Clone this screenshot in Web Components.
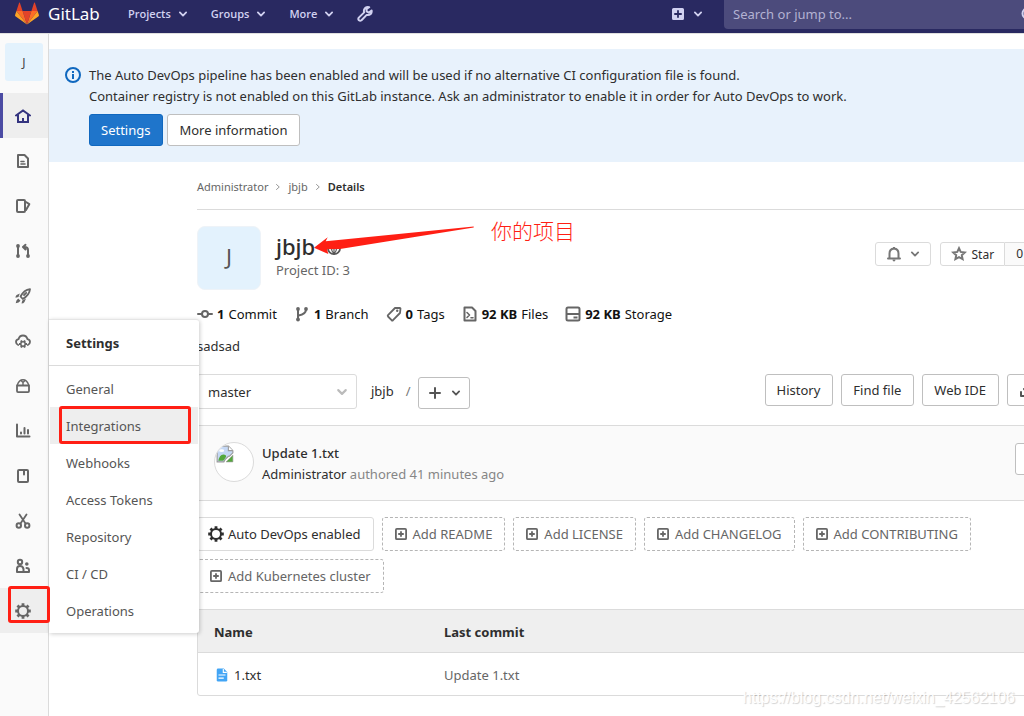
<!DOCTYPE html>
<html lang="en">
<head>
<meta charset="utf-8">
<title>Administrator / jbjb · GitLab</title>
<style>
  html, body { margin: 0; height: 100%; }
  body { overflow: hidden; background: #fff; color: #2e2e2e; font: 13px/21px "Noto Sans", "Noto Sans CJK SC", sans-serif; }
</style>
</head>
<body>
<project-page></project-page>
<script>
const define = (name, html, setup) => {
  const tpl = document.createElement('template');
  tpl.innerHTML = '<style>*{box-sizing:border-box}a{color:inherit;text-decoration:none}</style>' + html;
  customElements.define(name, class extends HTMLElement {
    constructor() {
      super();
      this.attachShadow({ mode: 'open' }).append(tpl.content.cloneNode(true));
    }
    connectedCallback() { if (setup) setup(this, this.shadowRoot); }
  });
};

const S = 'fill="none" stroke="currentColor" stroke-width="2" stroke-linecap="round" stroke-linejoin="round"';
const gear = (cx, cy, r, o, w, n = 8) => {
  let t = '';
  for (let i = 0; i < n; i++) {
    const a = Math.PI * 2 * i / n;
    t += `M${cx + Math.cos(a) * r} ${cy + Math.sin(a) * r}L${cx + Math.cos(a) * o} ${cy + Math.sin(a) * o}`;
  }
  return `<circle cx="${cx}" cy="${cy}" r="${r}" fill="none" stroke="currentColor" stroke-width="${w}"/><path d="${t}" fill="none" stroke="currentColor" stroke-width="${w * 1.4}"/>`;
};
const icons = {
  chevron: `<path ${S} stroke-width="2.900" d="M3 5.500 8 10.500 13 5.500"/>`,
  'chevron-right': `<path ${S} d="M5 3 10.500 8 5 13"/>`,
  home: `<path ${S} stroke-linejoin="miter" d="M1 7.500 8 2.500 15 7.500M3 7v7h10V7"/><path d="M7 10h2v4H7z" fill="currentColor"/>`,
  doc: `<path ${S} d="M3 2h6.500L13 5.500V14H3z"/><path ${S} stroke-width="1.600" d="M6 8.500h3M6 11h4"/>`,
  issues: `<path ${S} d="M3 2h6q1 0 1 1v10q0 1-1 1H3q-1 0-1-1V3q0-1 1-1z"/><path ${S} d="M11 4l3.300 2.200L11 12"/>`,
  merge: `<path ${S} d="M3 3v10M13 13V7q0-3-3.500-3M10.500 1.800 8 4l2.500 2.500"/><circle cx="3" cy="3" r="1.900" fill="currentColor"/><circle cx="3" cy="13" r="1.900" fill="currentColor"/><circle cx="13" cy="13" r="1.900" fill="currentColor"/>`,
  rocket: `<path ${S} stroke-width="1.800" d="M5.500 8.500Q9 2 15 1.200 14.500 7 7.800 11z M9 7l2.200-2.200"/><path fill="currentColor" d="M4.800 5.500 1.600 7Q.4 8 .5 9.800l3-.8zM11 10.500 9.500 14Q8.500 15.500 6.500 15.500L7.300 12.500zM3.200 10.500l2.300 2.200Q4 15 .7 15.300 1 12 3.200 10.500z"/>`,
  cloud: `<path ${S} stroke-width="1.800" d="M3.200 12Q1 11 1 9q0-2.300 2.500-2.800Q4.500 2.500 8 2.500t4.500 3.700Q15 6.700 15 9q0 2-2.200 3"/>` + gear(8, 11, 2.2, 4, 1.5, 6),
  package: `<path ${S} stroke-width="1.800" d="M2 7.500h12v5.600q0 1-1 1H3q-1 0-1-1z"/><path ${S} stroke-width="1.400" d="M2.300 7Q4 1.700 8 1.700T13.700 7M8 4.500 6 2.500M8 4.500 10 2.500M8 4.500V7"/>`,
  chart: `<path ${S} d="M2 1.500V13.500h12.500"/><path ${S} d="M6 9.500V10.500M9.500 5V10.500M13 7v3.500"/>`,
  book: `<path ${S} d="M4 2h8q1 0 1 1v10q0 1-1 1H4q-1 0-1-1V3q0-1 1-1z"/><path ${S} d="M9 2.500v4"/>`,
  scissors: `<path ${S} stroke-width="1.800" d="M4.500 1.500 10.500 10.500M11.500 1.500 5.500 10.500"/><circle cx="3.800" cy="12.500" r="2.200" ${S}/><circle cx="12.200" cy="12.500" r="2.200" ${S}/>`,
  users: `<circle cx="5" cy="4" r="2.200" ${S}/><circle cx="11.800" cy="6" r="1.800" fill="currentColor"/><path ${S} d="M2 14V11q0-3 3-3t3.500 3v3z"/><path ${S} d="M9 14h5v-2q0-2-2.500-2"/>`,
  gear: gear(8, 8, 5, 7.8, 2),
  info: `<circle cx="8" cy="8" r="7" ${S}/><path d="M7 7h2v5H7zM7 4h2v2H7z" fill="currentColor"/>`,
  wrench: `<path ${S} d="M14.600 4.500 11.800 6.600 9.600 5.400 9.600 2.800 12.200 1.200Q8.600.4 7.200 3.400 6.600 5 7.200 6.400L1.800 11.600Q.8 13 1.900 14.200 3.200 15.200 4.500 14.200L9.700 8.900Q12 9.500 13.700 8 15 6.600 14.600 4.500z"/>`,
  'plus-solid': `<path fill="currentColor" fill-rule="evenodd" d="M2 0h12q2 0 2 2v12q0 2-2 2H2q-2 0-2-2V2q0-2 2-2zM6.800 3v3.800H3v2.400h3.800V13h2.400V9.200H13V6.800H9.200V3z"/>`,
  'plus-square': `<path ${S} stroke-width="2.400" d="M2.500 1.200h11q1.300 0 1.300 1.300v11q0 1.300-1.300 1.300h-11q-1.300 0-1.300-1.300v-11q0-1.300 1.300-1.300z"/><path ${S} stroke-width="2.400" d="M8 5.200v5.600M5.200 8h5.600"/>`,
  plus: `<path ${S} d="M8 3v10M3 8h10"/>`,
  search: `<circle cx="6.500" cy="6.500" r="5" ${S}/><path ${S} d="M10.500 10.500 14.500 14.500"/>`,
  commit: `<circle cx="8" cy="8" r="3" ${S}/><path ${S} d="M1 8h3.500M11.500 8H15"/>`,
  branch: `<path ${S} d="M4 3v10M12 3.500Q12 8 4.500 9.500"/><circle cx="4" cy="3" r="1.900" fill="currentColor"/><circle cx="4" cy="13.500" r="1.900" fill="currentColor"/><circle cx="12" cy="3" r="1.900" fill="currentColor"/>`,
  tag: `<path ${S} stroke-width="1.800" d="M9 2l4.800-.2q.7 0 .7.700L14 7 7 14.200q-.7.600-1.400 0L2 10.500q-.6-.7 0-1.400z"/><circle cx="11.200" cy="4.800" r="1.200" fill="currentColor"/>`,
  code: `<path ${S} d="M2.500 1.500h7.500l3.500 3.500v9.500h-11z"/><path ${S} stroke-width="1.600" d="M5 6.500 7.500 9 5 11.500M9 11.700h2"/>`,
  disk: `<path ${S} d="M3 1.500h10q1.500 0 1.500 1.500v10q0 1.500-1.500 1.500H3q-1.500 0-1.500-1.500V3q0-1.500 1.500-1.500zM1.500 8h13"/><path ${S} stroke-linecap="butt" d="M8.500 11.500h4"/>`,
  globe: `<circle cx="8" cy="8" r="7" ${S}/><path ${S} stroke-width="1.300" d="M1 8h14M8 1v14M8 1Q2 8 8 15M8 1q6 7 0 14M2.500 4.500h11"/>`,
  bell: `<path ${S} d="M3.500 12V7.500Q3.500 3 8 2.500q4.500.5 4.500 5V12M2 12.500h12"/><path fill="currentColor" d="M6.500 13.500h3Q9.500 15.500 8 15.500T6.500 13.500zM7 1h2v2H7z"/>`,
  star: `<path ${S} stroke-linejoin="miter" d="M8 2.200 9.700 5.900 13.800 6.400 10.800 9.200 11.600 13.200 8 11.200 4.400 13.200 5.200 9.200 2.200 6.400 6.300 5.900z"/>`,
  download: `<path ${S} d="M2 10v4h12v-4M8 2v8M5 7l3 3 3-3"/>`,
  file: `<path fill="#42a5f5" d="M3.500.5H10L14 4.500V14q0 1.500-1.500 1.500h-9Q2 15.500 2 14V2Q2 .5 3.500.5z"/><path d="M9.500 1v4h4M4 8h8M4 11.500h6" fill="none" stroke="#fff" stroke-width="1.300"/>`,
  broken: `<path d="M1 1h10l4 4v2l-3 3-1 0-3 3-1 2H1z" fill="#c5d8f5" stroke="#9a9a9a"/><path d="M11 1v4h4" fill="#fff" stroke="#9a9a9a"/><path d="M2 14q1-5 4.500-5.500Q9 8.500 9 10.500L6.500 14z" fill="#54a83c"/><ellipse cx="5" cy="5" rx="2.200" ry="1.300" fill="#fff"/><path d="M15 9v6H9z" fill="#54a83c" stroke="#9a9a9a" stroke-width=".6"/>`,
  tanuki: `<path fill="#e24329" d="M12 22.500 16.400 9H7.600z"/><path fill="#fc6d26" d="M12 22.500 7.600 9H1.400zM12 22.500 16.400 9h6.200z"/><path fill="#fca326" d="M1.400 9 0 13.200q-.1.600.4 1L12 22.500zM22.600 9 24 13.200q.1.600-.4 1L12 22.500z"/><path fill="#e24329" d="M1.400 9h6.200L4.900.8q-.4-.8-.8 0zM22.600 9h-6.200L19.100.8q.4-.8.8 0z"/>`
};

define('gl-icon', `<style>:host{display:inline-block;flex:none;width:var(--size,16px);height:var(--size,16px)}svg{display:block;width:100%;height:100%}</style><svg aria-hidden="true"></svg>`,
  (el, root) => {
    const svg = root.querySelector('svg'), name = el.getAttribute('name');
    svg.setAttribute('viewBox', name === 'tanuki' ? '0 0 24 24' : '0 0 16 16');
    /* a later stroke attribute replaces the shared one */
    svg.innerHTML = icons[name].replace(/stroke-width="2"( [^>]*?)(stroke-width="[\d.]+")/g, '$1$2').replace(/stroke-linejoin="round"( [^>]*?)?(stroke-linejoin=)/g, '$1$2').replace(/stroke-linecap="round"( [^>]*?)(stroke-linecap=)/g, '$1$2');
  });

define('gl-button', `<style>
  :host{display:inline-block;flex:none}
  button{display:flex;align-items:center;gap:8px;height:32px;padding:0 12px 0 11px;border:1px solid #bfbfbf;border-radius:3px;background:#fff;color:#2e2e2e;font:inherit;white-space:nowrap;cursor:pointer}
  :host([variant=primary]) button{background:#1f75cb;border-color:#1068bf;color:#fff}
  :host([variant=small]) button{height:24px;border-color:#dbdbdb;padding:0 10px;font-size:12px}
  :host([variant=compact]) button{padding:0 8px}
  :host([joined]) button{gap:5px;border-radius:3px 0 0 3px}
</style><button type="button"><slot></slot></button>`,
  (el, root) => { if (el.title) root.querySelector('button').setAttribute('aria-label', el.title); });

define('gl-chip', `<style>
  :host{display:block;flex:none}
  a{display:flex;align-items:center;height:34px;padding:0 12px;gap:6px;border:1px dashed #b5b5b5;border-radius:3px;color:#666;white-space:nowrap}
  gl-icon{--size:12px}
  :host([solid]) a{border:1px solid #dbdbdb;color:#2e2e2e;padding:0 12px 0 10px;gap:4px}
</style><a href="#"><slot name="icon"><gl-icon name="plus-square"></gl-icon></slot><slot></slot></a>`);

define('nav-menu', `<style>
  :host{display:block}
  button{display:flex;align-items:center;gap:7px;border:0;padding:0;background:none;color:#d1d1f0;font:600 11px/16px "Open Sans",sans-serif;cursor:pointer}
  :host([title]) button{gap:9px}
  gl-icon{--size:10px}
</style><button type="button"><slot></slot><gl-icon name="chevron"></gl-icon></button>`,
  (el, root) => { if (el.title) root.querySelector('button').setAttribute('aria-label', el.title); });

define('top-bar', `<style>
  :host{display:block;background:#292961;border-bottom:1px solid #dfdfdf}
  header{display:flex;align-items:center;height:33px;padding:0 0 6px 15px;width:calc(100% + 24px);color:#d1d1f0}
  .brand{display:flex;align-items:center;gap:9px;color:#fff;font-size:17px;line-height:24px;width:113px}
  .brand gl-icon{--size:24px}
  nav{display:flex;align-items:center;gap:23px}
  nav a{display:flex}
  .new{margin-left:auto;margin-right:21px}
  label{display:flex;align-items:center;align-self:flex-start;width:324px;height:29px;padding:0 11px 0 9px;background:#4c4b7c;border-radius:0 0 0 4px}
  input{flex:1;min-width:0;border:0;padding:0;background:none;outline:0;color:#fff;font:inherit;font-size:13px}
  input::placeholder{color:#b3b2d2;opacity:1}
</style>
<header>
  <a class="brand" href="#"><gl-icon name="tanuki"></gl-icon>GitLab</a>
  <nav>
    <nav-menu>Projects</nav-menu><nav-menu>Groups</nav-menu><nav-menu>More</nav-menu>
    <a href="#" aria-label="Admin area"><gl-icon name="wrench"></gl-icon></a>
  </nav>
  <nav-menu class="new" title="New"><gl-icon name="plus-solid" style="--size:12px"></gl-icon></nav-menu>
  <label><input type="text" placeholder="Search or jump to..." aria-label="Search or jump to"><gl-icon name="search"></gl-icon></label>
</header>`);

define('side-bar', `<style>
  :host{display:block;flex:none;width:49px;background:#fafafa;border-right:1px solid #dbdbdb;padding-top:9px;color:#666}
  .avatar{display:grid;place-items:center;width:38px;height:38px;margin:0 5px 12px;border-radius:3px;background:#e3f2fd;color:#444;font-size:12px}
  ul{list-style:none;margin:0;padding:0}
  li{position:relative}
  .item{display:flex;align-items:center;height:45px;padding-left:15px}
  .on{background:#eee;color:#33337f;box-shadow:inset 3px 0 #4b4ba3}
  .open{background:#eee}
</style>
<nav aria-label="Project">
  <a class="avatar" href="#">J</a>
  <ul></ul>
</nav>`,
  (el, root) => {
    root.querySelector('ul').innerHTML = ['home', 'doc', 'issues', 'merge', 'rocket', 'cloud', 'package', 'chart', 'book', 'scissors', 'users', 'gear']
      .map(n => `<li><a class="item ${n === 'home' ? 'on' : n === 'gear' ? 'open' : ''}" href="#" aria-label="${n}"><gl-icon name="${n}"></gl-icon></a>${n === 'gear' ? '<settings-flyout></settings-flyout>' : ''}</li>`).join('');
  });

define('settings-flyout', `<style>
  :host{position:absolute;left:49px;bottom:0;z-index:2;width:150px;background:#fff;border-top:1px solid #e5e5e5;box-shadow:1px 1px 4px rgba(0,0,0,.2);border-radius:0 3px 3px 0;color:#555}
  a{display:block}
  .head{padding:13px 17px 11px;border-bottom:1px solid #dbdbdb;font-weight:700;color:#2e2e2e}
  ul{list-style:none;margin:0;padding:4px 1px}
  li a{padding:9px 16px 7px}
  .hover{background:#eee}
  mark-box{left:10px;right:8px;top:86px;height:38px}
</style>
<a class="head" href="#">Settings</a>
<ul>
  <li><a href="#">General</a></li><li><a class="hover" href="#">Integrations</a></li><li><a href="#">Webhooks</a></li>
  <li><a href="#">Access Tokens</a></li><li><a href="#">Repository</a></li><li><a href="#">CI / CD</a></li><li><a href="#">Operations</a></li>
</ul>
<mark-box></mark-box>`);

define('mark-box', `<style>:host{display:block;position:absolute;box-sizing:border-box;border:3px solid #ff1f14;border-radius:3px;pointer-events:none}</style>`);

define('devops-alert', `<style>
  :host{display:flex;gap:8px;margin-top:15px;padding:16px;background:#e8f2fc}
  .icon{color:#1068bf;margin-top:2px}
  p{margin:0;line-height:21px}
  .actions{display:flex;gap:4px;margin-top:7px}
</style>
<gl-icon class="icon" name="info"></gl-icon>
<div>
  <p>The Auto DevOps pipeline has been enabled and will be used if no alternative CI configuration file is found.</p>
  <p>Container registry is not enabled on this GitLab instance. Ask an administrator to enable it in order for Auto DevOps to work.</p>
  <div class="actions"><gl-button variant="primary">Settings</gl-button><gl-button>More information</gl-button></div>
</div>`);

define('crumb-trail', `<style>
  :host{display:flex;align-items:center;gap:6px;height:48px;padding-top:2px;border-bottom:1px solid #dbdbdb;font-size:11px;color:#666;box-sizing:border-box}
  gl-icon{--size:8px;color:#999}
  .now{font-weight:600;color:#2e2e2e}
</style><a href="#">Administrator</a><gl-icon name="chevron-right"></gl-icon><a href="#">jbjb</a><gl-icon name="chevron-right"></gl-icon><a class="now" href="#">Details</a>`);

define('project-head', `<style>
  :host{display:flex;margin-top:16px;height:64px}
  .avatar{display:grid;place-items:center;width:64px;height:64px;padding-bottom:3px;border:1px solid #eef3f8;border-radius:8px;background:#e3f2fd;color:#555;font-size:22px}
  .title{position:relative;margin-left:15px;padding-top:6px}
  h1{display:flex;align-items:center;gap:12px;margin:0;font-size:22px;line-height:28px;font-weight:500}
  h1 gl-icon{--size:14px;color:#555;margin-top:4px}
  .id{color:#666;line-height:20px}
  .note{position:absolute;left:215px;top:-10px;color:#ff1f14;font-size:21px;line-height:28px;white-space:nowrap;font-family:"Noto Sans CJK SC",sans-serif;font-weight:300}
  .arrow{position:absolute;left:38px;top:0;width:162px;height:30px}
  .actions{display:flex;align-items:flex-start;margin-left:auto;gap:9px;padding:16px 37px 0 0;color:#2e2e2e}
  gl-icon{color:#777}
  .count{display:flex}
  .count a{height:24px;padding:0 11px;border:1px solid #dbdbdb;border-left:0;background:#fafafa;border-radius:0 3px 3px 0;font-size:12px;line-height:22px}
</style>
<div class="avatar">J</div>
<div class="title">
  <h1>jbjb <gl-icon name="globe"></gl-icon></h1>
  <div class="id">Project ID: 3</div>
  <svg class="arrow" viewBox="0 0 162 30" aria-hidden="true"><path fill="#ff1f14" d="M0 21.700 13.700 11.300 11.700 15.300 159.700.500V1.500L26 23 13 23.300 14.300 28z"/></svg>
  <span class="note" lang="zh-CN">你的项目</span>
</div>
<div class="actions">
  <gl-button variant="small" title="Notification setting"><gl-icon name="bell"></gl-icon><gl-icon name="chevron" style="--size:10px"></gl-icon></gl-button>
  <span class="count"><gl-button variant="small" joined><gl-icon name="star"></gl-icon>Star</gl-button><a href="#">0</a></span>
</div>`);

define('project-stats', `<style>
  :host{display:flex;gap:17px;margin-top:14px;line-height:20px}
  a{display:flex;align-items:center;gap:4px;white-space:nowrap;color:#111}
  gl-icon{color:#666}
</style>
<a href="#"><gl-icon name="commit"></gl-icon><b>1</b> Commit</a><a href="#"><gl-icon name="branch"></gl-icon><b>1</b> Branch</a><a href="#"><gl-icon name="tag"></gl-icon><b>0</b> Tags</a><a href="#"><gl-icon name="code"></gl-icon><b>92 KB</b> Files</a><a href="#"><gl-icon name="disk"></gl-icon><b>92 KB</b> Storage</a>`);

define('tree-controls', `<style>
  :host{display:flex;align-items:flex-start;margin-top:17px;height:35px}
  .pick{position:relative;display:block;width:160px}
  select{appearance:none;width:100%;height:35px;padding:1px 10px 0;border:1px solid #dbdbdb;border-radius:3px;background:#fff;color:#2e2e2e;font:inherit}
  .pick gl-icon{position:absolute;right:9px;top:12px;--size:12px;color:#bbb}
  .path{display:flex;gap:12px;margin:7px 7px 0 14px}
  .path span{color:#777}
  .add{margin-top:3px}
  .right{display:flex;gap:8px;margin-left:auto}
  gl-icon{color:#555}
</style>
<label class="pick"><select aria-label="Branch"><option>master</option></select><gl-icon name="chevron"></gl-icon></label>
<div class="path"><a href="#">jbjb</a><span>/</span></div>
<gl-button class="add" variant="compact" title="Add to tree"><gl-icon name="plus"></gl-icon><gl-icon name="chevron" style="--size:10px"></gl-icon></gl-button>
<div class="right"><gl-button>History</gl-button><gl-button>Find file</gl-button><gl-button>Web IDE</gl-button><gl-button title="Download"><gl-icon name="download"></gl-icon><gl-icon name="chevron" style="--size:16px"></gl-icon></gl-button></div>`);

define('last-commit', `<style>
  :host{display:flex;align-items:center;margin-top:16px;height:76px;padding:0 0 0 16px;border:1px solid #dbdbdb;background:#fafafa;box-sizing:border-box}
  .face{width:40px;height:40px;margin-bottom:2px;border:1px solid #dbdbdb;border-radius:50%;background:#fff;overflow:hidden;padding:2px 1px}
  .text{margin-left:8px;padding-top:2px;color:#868686}
  .text a{color:#2e2e2e}
  .title{font-weight:500}
  gl-button{margin-left:auto;margin-bottom:8px}
</style>
<div class="face"><gl-icon name="broken" style="--size:18px"></gl-icon></div>
<div class="text"><a class="title" href="#">Update 1.txt</a><br><a href="#">Administrator</a> authored 41 minutes ago</div>
<gl-button title="Commit status"><gl-icon name="commit" style="--size:31px"></gl-icon></gl-button>`);

define('chip-row', `<style>
  :host{display:flex;flex-wrap:wrap;gap:8px;margin-top:16px;padding-right:56px}
</style>
<gl-chip solid><gl-icon slot="icon" name="gear"></gl-icon>Auto DevOps enabled</gl-chip>
<gl-chip>Add README</gl-chip><gl-chip>Add LICENSE</gl-chip><gl-chip>Add CHANGELOG</gl-chip><gl-chip>Add CONTRIBUTING</gl-chip>
<gl-chip>Add Kubernetes cluster</gl-chip>`);

define('file-table', `<style>
  :host{display:block;margin-top:16px;border:1px solid #dbdbdb;border-radius:3px}
  table{width:100%;border-collapse:separate;border-spacing:0;table-layout:fixed}
  th,td{height:43px;padding:2px 16px 0;text-align:left}
  th{background:#efefef;border-bottom:1px solid #dbdbdb;font-weight:700}
  th:first-child{width:230px}
  td{height:42px;color:#666}
  .name{display:flex;align-items:center;gap:5px;color:#2e2e2e}
  gl-icon{--size:14px;margin-left:1px}
</style>
<table><thead><tr><th>Name</th><th>Last commit</th></tr></thead>
<tbody><tr><td><a class="name" href="#"><gl-icon name="file"></gl-icon>1.txt</a></td><td><a href="#">Update 1.txt</a></td></tr></tbody></table>`);

define('project-page', `<style>
  :host{display:flex;flex-direction:column;position:relative;min-height:100vh;overflow:hidden}
  .body{display:flex;flex:1;position:relative}
  main{flex:1;min-width:0}
  .content{margin:0 -48px 0 148px}
  .desc{margin:12px 0 0;line-height:21px}
  .gear{left:8px;top:552px;width:42px;height:37px;z-index:3}
  .mark{position:absolute;right:9px;bottom:8px;font:16px/20px "Liberation Sans",sans-serif;color:#fff;text-shadow:1px 1px 1px rgba(0,0,0,.18)}
</style>
<top-bar></top-bar>
<div class="body">
  <side-bar></side-bar>
  <main>
    <devops-alert></devops-alert>
    <div class="content">
      <crumb-trail></crumb-trail>
      <project-head></project-head>
      <project-stats></project-stats>
      <p class="desc">sadsad</p>
      <tree-controls></tree-controls>
      <last-commit></last-commit>
      <chip-row></chip-row>
      <file-table></file-table>
    </div>
  </main>
  <mark-box class="gear"></mark-box>
</div>
<div class="mark">https://blog.csdn.net/weixin_42562106</div>`);
</script>
</body>
</html>
